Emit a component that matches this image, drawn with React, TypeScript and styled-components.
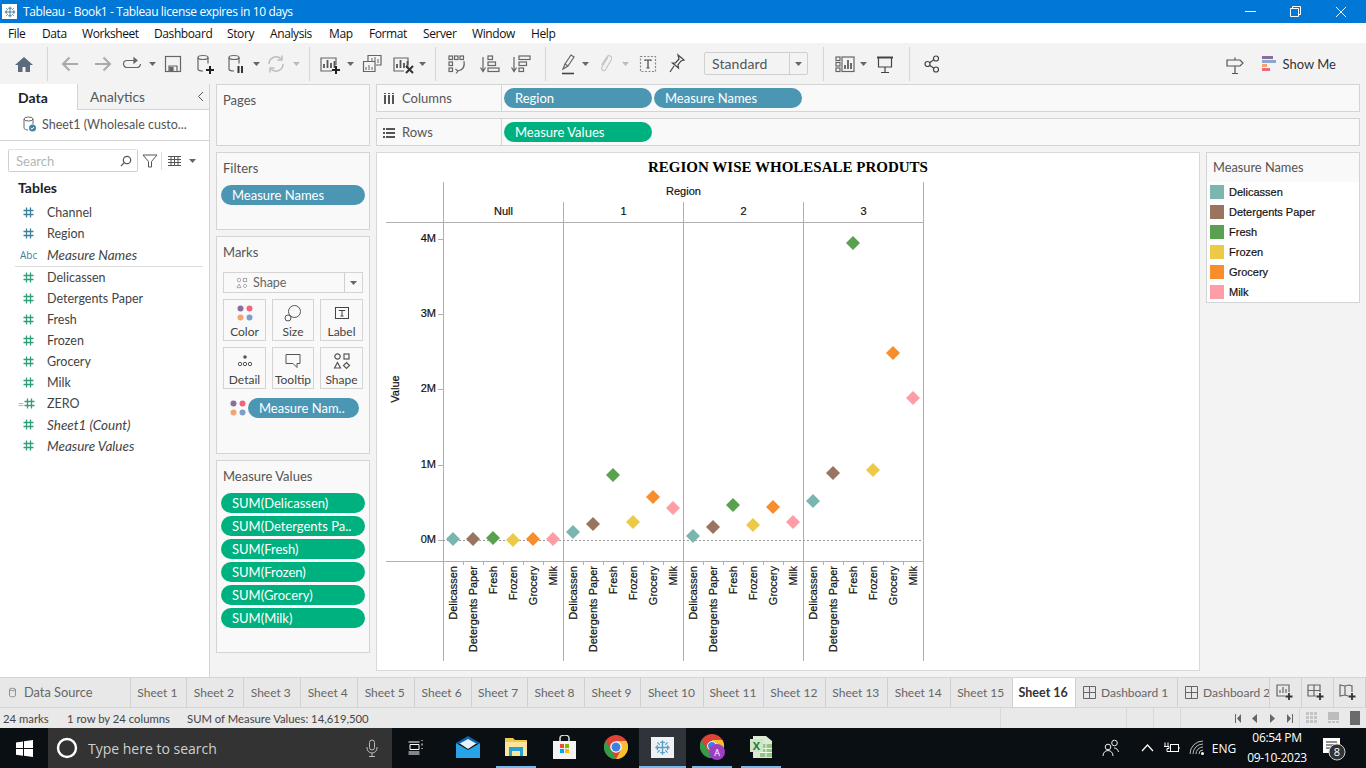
import React, { Fragment, ReactNode } from 'react';
import styled, { createGlobalStyle } from 'styled-components';

const BLUE = '#4b96b3';
const GREEN = '#00b180';
const UI = '"Lato", "Open Sans", sans-serif';
const WIN = '"Open Sans", "Noto Sans", sans-serif';

const Global = createGlobalStyle`
  html, body { margin: 0; padding: 0; width: 1366px; height: 768px; overflow: hidden; background: #f3f3f3; }
  * { box-sizing: border-box; }
  svg { display: block; flex: none; }
`;

const Page = styled.div`
  width: 1366px;
  height: 768px;
  display: flex;
  flex-direction: column;
  font-family: ${UI};
  color: #444;
`;

/* title bar */
const TitleBar = styled.div`
  height: 23px;
  background: #0178d6;
  display: flex;
  align-items: center;
  color: #fff;
  font: 12px ${WIN};
  padding-right: 2px;
`;
const TitleLogo = styled.div`
  width: 15px;
  height: 15px;
  margin-left: 2px;
  margin-right: 6px;
  background: #fff;
  display: flex;
  align-items: center;
  justify-content: center;
`;
const TitleText = styled.div`
  flex: 1;
  letter-spacing: -0.37px;
`;
const WinButton = styled.div<{ $w: number }>`
  width: ${p => p.$w}px;
  display: flex;
  justify-content: center;
`;

/* menu */
const MenuBar = styled.div`
  height: 20px;
  background: #fff;
  padding-left: 8px;
  display: grid;
  grid-template-columns: 34px 40px 72px 73px 43px 59px 40px 54px 49px 59px auto;
  align-items: center;
  font: 12px ${WIN};
  color: #111;
`;
const MenuItem = styled.span`
  letter-spacing: -0.4px;
`;

/* toolbar */
const Toolbar = styled.div`
  height: 41px;
  background: #f3f3f3;
  display: flex;
  align-items: center;
`;
const Tool = styled.div<{ $ml: number; $w: number }>`
  margin-left: ${p => p.$ml}px;
  width: ${p => p.$w}px;
  height: 24px;
  display: flex;
  align-items: center;
  justify-content: center;
`;
const ToolSep = styled.div<{ $ml: number }>`
  margin-left: ${p => p.$ml}px;
  width: 1px;
  height: 34px;
  background: #d6d6d6;
`;
const Combo = styled.div<{ $ml: number }>`
  margin-left: ${p => p.$ml}px;
  width: 104px;
  height: 23px;
  border: 1px solid #cfcfcf;
  border-radius: 2px;
  display: flex;
  align-items: center;
  font-size: 14px;
  letter-spacing: 0.1px;
  color: #555;
  padding-left: 7px;
`;
const ComboLabel = styled.span`
  flex: 1;
  margin-bottom: 1px;
`;
const ComboCaret = styled.div`
  width: 18px;
  height: 100%;
  border-left: 1px solid #cfcfcf;
  display: flex;
  align-items: center;
  justify-content: center;
`;
const ShowMe = styled.div`
  margin-left: 18px;
  display: flex;
  align-items: center;
  gap: 7px;
  font-size: 13px;
  color: #333;
`;

/* body */
const Body = styled.div`
  height: 593px;
  display: flex;
  background: #f3f3f3;
`;
const DataPane = styled.div`
  width: 210px;
  background: #fff;
  border-right: 1px solid #d4d4d4;
`;
const PaneTabs = styled.div`
  height: 26px;
  display: flex;
  background: #f3f3f3;
`;
const PaneTab = styled.div<{ $active?: boolean }>`
  width: ${p => (p.$active ? 77 : 132)}px;
  display: flex;
  align-items: center;
  padding-left: ${p => (p.$active ? 18 : 12)}px;
  font-size: ${p => (p.$active ? 14 : 13.7)}px;
  font-weight: ${p => (p.$active ? 700 : 400)};
  color: ${p => (p.$active ? '#222' : '#555')};
  background: ${p => (p.$active ? '#fff' : '#f3f3f3')};
  border-bottom: ${p => (p.$active ? 'none' : '1px solid #d4d4d4')};
  border-left: ${p => (p.$active ? 'none' : '1px solid #d4d4d4')};
`;
const Chevron = styled.div`
  flex: 1;
  display: flex;
  align-items: center;
  justify-content: flex-end;
  padding-right: 5px;
`;
const SourceRow = styled.div`
  height: 31px;
  border-bottom: 1px solid #d4d4d4;
  display: flex;
  align-items: center;
  padding: 0 0 2px 22px;
  gap: 5px;
  font-size: 12.5px;
  color: #555;
`;
const SearchRow = styled.div`
  margin-top: 8px;
  height: 23px;
  display: flex;
  align-items: center;
  padding-left: 8px;
`;
const SearchBox = styled.div`
  width: 130px;
  height: 23px;
  border: 1px solid #cfcfcf;
  border-top-color: #e2e2e2;
  border-radius: 2px;
  display: flex;
  align-items: center;
  justify-content: space-between;
  padding: 0 5px 0 7px;
  font-size: 13px;
  color: #b5b5b5;
`;
const FilterSlot = styled.div`
  margin-left: 4px;
`;
const SearchDivider = styled.div`
  width: 1px;
  height: 18px;
  background: #ddd;
  margin: 0 6px 0 3px;
`;
const ViewCaret = styled.div`
  margin-left: 8px;
`;
const TablesTitle = styled.div`
  margin: 5px 0 0 18px;
  height: 22px;
  line-height: 22px;
  font-size: 14px;
  font-weight: 700;
  color: #222;
`;
const FieldList = styled.div`
  margin-top: 3px;
`;
const FieldRow = styled.div<{ $italic?: boolean }>`
  height: 21px;
  display: flex;
  align-items: center;
  font-size: ${p => (p.$italic ? 13.5 : 12.5)}px;
  font-style: ${p => (p.$italic ? 'italic' : 'normal')};
  color: #444;
`;
const FieldIcon = styled.div<{ $color: string }>`
  width: 47px;
  padding-left: 23px;
  font-size: 10px;
  font-style: normal;
  font-family: ${WIN};
  color: ${p => p.$color};
  display: flex;
  align-items: center;
`;
const AbcLabel = styled.span`
  margin-left: -3px;
`;
const CalcMark = styled.span`
  margin-left: -5px;
`;
const FieldDivider = styled.div`
  height: 1px;
  background: #dcdcdc;
  margin: 1px 6px 0 15px;
`;

const SideColumn = styled.div`
  width: 160px;
  margin-left: 6px;
  display: flex;
  flex-direction: column;
  gap: 6px;
`;
const Card = styled.div<{ $h: number }>`
  width: 154px;
  height: ${p => p.$h}px;
  background: #f9f9f9;
  border: 1px solid #d4d4d4;
  padding: 0 4px;
`;
const CardTitle = styled.div`
  height: 32px;
  padding: 7px 2px 0;
  font-size: 13px;
  line-height: 17px;
  color: #555;
`;
const Pill = styled.div<{ $green?: boolean; $w?: number }>`
  width: ${p => (p.$w ? `${p.$w}px` : '100%')};
  height: 20px;
  border-radius: 10px;
  background: ${p => (p.$green ? GREEN : BLUE)};
  color: #fff;
  font-size: 13px;
  line-height: 20px;
  padding-left: 11px;
  white-space: nowrap;
  overflow: hidden;
`;
const PillStack = styled.div`
  display: flex;
  flex-direction: column;
  gap: 3px;
`;
const MarkSelect = styled.div`
  margin: 3px 2px 0;
  height: 21px;
  border: 1px solid #d4d4d4;
  background: #f9f9f9;
  display: flex;
  align-items: center;
  font-size: 12.5px;
  color: #666;
  padding-left: 12px;
  gap: 5px;
`;
const MarkSelectLabel = styled.span`
  flex: 1;
`;
const MarkGrid = styled.div`
  margin: 6px 2px 0;
  display: grid;
  grid-template-columns: 43px 42px 43px;
  grid-auto-rows: 42px;
  column-gap: 6px;
  row-gap: 6px;
`;
const MarkButton = styled.div`
  border: 1px solid #d4d4d4;
  display: flex;
  flex-direction: column;
  align-items: center;
  font-size: 12px;
  color: #444;
  padding-top: 3px;
  gap: 1px;
  line-height: 15px;
`;
const MarkIconBox = styled.div`
  height: 20px;
  display: flex;
  align-items: center;
`;
const MarkPillRow = styled.div`
  margin-top: 9px;
  display: flex;
  align-items: center;
  padding-left: 9px;
  gap: 2px;
`;

const MainColumn = styled.div`
  width: 984px;
  display: flex;
  flex-direction: column;
`;
const Shelf = styled.div`
  height: 28px;
  margin-bottom: 6px;
  background: #f9f9f9;
  border: 1px solid #d4d4d4;
  display: flex;
  align-items: center;
`;
const ShelfLabel = styled.div`
  width: 125px;
  height: 100%;
  border-right: 1px solid #d4d4d4;
  display: flex;
  align-items: center;
  padding-left: 6px;
  gap: 7px;
  font-size: 13px;
  color: #555;
  margin-right: 2px;
`;
const ShelfPills = styled.div`
  display: flex;
  gap: 2px;
`;
const ContentRow = styled.div`
  display: flex;
  gap: 6px;
`;
const ChartCard = styled.div`
  width: 824px;
  height: 519px;
  background: #fff;
  border: 1px solid #d9d9d9;
`;
const ChartText = styled.text`
  font-family: "Liberation Sans", Arial, sans-serif;
  font-size: 11px;
  fill: #111;
  stroke: #111;
  stroke-width: 0.2px;
`;
const ChartTitle = styled.text`
  font-family: "Liberation Serif", "Times New Roman", serif;
  font-size: 15px;
  font-weight: 700;
  fill: #000;
`;
const Legend = styled.div`
  width: 154px;
  height: 151px;
  border: 1px solid #d4d4d4;
  background: #fff;
`;
const LegendHead = styled.div`
  height: 29px;
  background: #f9f9f9;
  padding: 6px 6px 0;
  font-size: 12.8px;
  color: #555;
`;
const LegendRow = styled.div`
  height: 20px;
  display: flex;
  align-items: center;
  padding-left: 3px;
  gap: 5px;
  font: 11px "Liberation Sans", Arial, sans-serif;
  color: #111;
  -webkit-text-stroke: 0.2px #111;
`;
const Swatch = styled.div<{ $c: string }>`
  width: 14px;
  height: 14px;
  background: ${p => p.$c};
`;

/* tabs */
const TabBar = styled.div`
  height: 31px;
  background: #e8e8e8;
  border-top: 1px solid #d4d4d4;
  border-bottom: 1px solid #d4d4d4;
  display: flex;
`;
const SheetTab = styled.div<{ $w: number; $active?: boolean }>`
  width: ${p => p.$w}px;
  display: flex;
  align-items: center;
  justify-content: center;
  gap: 5px;
  padding: 0 2px 1px 0;
  font-size: ${p => (p.$active ? 12.5 : 12)}px;
  white-space: nowrap;
  overflow: hidden;
  color: ${p => (p.$active ? '#333' : '#666')};
  font-weight: ${p => (p.$active ? 700 : 400)};
  background: ${p => (p.$active ? '#fff' : 'transparent')};
  border-right: 1px solid #d0d0d0;
`;
const SourceTab = styled(SheetTab)`
  justify-content: flex-start;
  padding-left: 9px;
  gap: 8px;
  font-size: 12.8px;
`;
const ClippedTab = styled(SheetTab)`
  justify-content: flex-start;
  padding-left: 7px;
`;

/* status */
const StatusBar = styled.div`
  height: 20px;
  background: #e9e9e9;
  display: flex;
  align-items: center;
  font-size: 11.3px;
  color: #444;
`;
const StatusText = styled.span<{ $w: number; $pad?: number }>`
  width: ${p => p.$w}px;
  padding-left: ${p => p.$pad || 0}px;
  white-space: nowrap;
`;
const StatusCell = styled.div<{ $w: number; $end?: boolean }>`
  width: ${p => p.$w}px;
  height: 100%;
  border-left: 1px solid #d8d8d8;
  display: flex;
  align-items: center;
  justify-content: ${p => (p.$end ? 'flex-end' : 'center')};
  padding: 0 6px;
`;

/* windows taskbar */
const Taskbar = styled.div`
  height: 40px;
  background: #0a0f14;
  display: flex;
  align-items: center;
  color: #fff;
  font-family: ${WIN};
`;
const StartButton = styled.div`
  width: 48px;
  display: flex;
  justify-content: center;
`;
const SearchBar = styled.div`
  width: 344px;
  height: 40px;
  background: #333;
  display: flex;
  align-items: center;
  padding-left: 8px;
  gap: 10px;
  font-size: 14px;
  color: #cfcfcf;
`;
const SearchHint = styled.span`
  flex: 1;
`;
const MicSlot = styled.div`
  width: 26px;
`;
const TaskApp = styled.div<{ $w: number; $ml?: number; $on?: boolean; $lit?: boolean }>`
  width: ${p => p.$w}px;
  margin-left: ${p => p.$ml || 0}px;
  height: 40px;
  display: flex;
  align-items: center;
  justify-content: center;
  background: ${p => (p.$lit ? '#2f343a' : 'transparent')};
  border-bottom: 2px solid ${p => (p.$on ? '#76b9ed' : 'transparent')};
`;
const AppTile = styled.div`
  width: 23px;
  height: 21px;
  background: #eef2f5;
  display: flex;
  align-items: center;
  justify-content: center;
`;
const Tray = styled.div`
  margin-left: auto;
  display: flex;
  align-items: center;
  height: 100%;
`;
const TraySlot = styled.div<{ $w: number; $ml?: number }>`
  width: ${p => p.$w}px;
  margin-left: ${p => p.$ml || 0}px;
  display: flex;
  justify-content: center;
  align-items: center;
  font-size: 12px;
`;
const Clock = styled.div`
  width: 78px;
  text-align: center;
  font-size: 12px;
  line-height: 20px;
  letter-spacing: -0.3px;
`;

/* icons */
const Svg = ({ w = 24, h = 24, children }: { w?: number; h?: number; children: ReactNode }) => (
  <svg width={w} height={h} viewBox={`0 0 ${w} ${h}`} fill="none" stroke="#666" strokeWidth="1.2">{children}</svg>
);
const Caret = ({ c = '#666' }: { c?: string }) => (
  <svg width="7" height="4" viewBox="0 0 7 4"><path d="M0 0h7L3.5 4z" fill={c} /></svg>
);
const Cylinder = () => (
  <Fragment>
    <ellipse cx="8" cy="5.5" rx="5" ry="2" />
    <path d="M3 5.5v11.5c0 1.2 2 2 5 2M13 5.5v6" />
  </Fragment>
);
const BarsGlyph = ({ y = 0 }: { y?: number }) => (
  <path d={`M5 ${y + 13}v-4M8.5 ${y + 13}v-8M12 ${y + 13}v-5M15.5 ${y + 13}v-7`} strokeWidth="1.8" stroke="#555" />
);
const HashIcon = ({ c }: { c: string }) => (
  <svg width="11" height="11" viewBox="0 0 11 11" stroke={c} strokeWidth="1.3" fill="none">
    <path d="M3.5 0.5v10M7.5 0.5v10M0.5 3.5h10M0.5 7.5h10" />
  </svg>
);
const Dots = () => (
  <svg width="16" height="16" viewBox="0 0 16 16">
    <circle cx="3.5" cy="3.5" r="3" fill="#8a6f9c" />
    <circle cx="12.5" cy="3.5" r="3" fill="#f2667a" />
    <circle cx="3.5" cy="12.5" r="3" fill="#f4a56f" />
    <circle cx="12.5" cy="12.5" r="3" fill="#7f9fcb" />
  </svg>
);
const ShapeGlyph = ({ c = '#666', size = 18 }: { c?: string; size?: number }) => (
  <svg width={size} height={size} viewBox="0 0 18 18" fill="none" stroke={c} strokeWidth="1.2">
    <circle cx="4.5" cy="4.5" r="2.7" />
    <rect x="11" y="2" width="5" height="5" />
    <path d="M4.5 10.5l3 5.5h-6z" />
    <path d="M13.5 10.5l3 3-3 3-3-3z" />
  </svg>
);
const Snowflake = ({ size, c }: { size: number; c: string }) => (
  <svg width={size} height={size} viewBox="0 0 24 24" stroke={c} fill="none" strokeWidth="1.8">
    <path d="M12 3v18M3 12h18" />
    <path d="M9 5.5h6M9 18.5h6M5.5 9v6M18.5 9v6" />
    <path d="M5.5 5.5l3 3M18.5 5.5l-3 3M5.5 18.5l3-3M18.5 18.5l-3-3" strokeWidth="1.5" />
  </svg>
);
const ChromeBall = ({ size }: { size: number }) => (
  <svg width={size} height={size} viewBox="0 0 24 24">
    <circle cx="12" cy="12" r="12" fill="#db4437" />
    <path d="M12 24A12 12 0 0 1 1.6 6L7.5 16 12 24z" fill="#2f9e48" />
    <path d="M12 24a12 12 0 0 0 10.4-18H12l4.5 10z" fill="#fbc02d" />
    <circle cx="12" cy="12" r="5.8" fill="#fff" />
    <circle cx="12" cy="12" r="4.5" fill="#3f81e0" />
  </svg>
);

const toolItems: { c: number; w: number; icon?: ReactNode; sep?: boolean }[] = [
  { c: 24, w: 20, icon: <Svg w={20} h={20}><path d="M10 3L1 11h3v7h4.5v-5h3v5H16v-7h3z" fill="#5b6b7d" stroke="none" /></Svg> },
  { c: 47.5, w: 1, sep: true },
  { c: 70, w: 18, icon: <Svg w={18}><path d="M17 12H2M8.5 5.5L2 12l6.5 6.5" stroke="#a9a9a9" strokeWidth="2" /></Svg> },
  { c: 103, w: 18, icon: <Svg w={18}><path d="M1 12h15M9.5 5.5L16 12l-6.5 6.5" stroke="#a9a9a9" strokeWidth="2" /></Svg> },
  { c: 132, w: 20, icon: <Svg w={20}><path d="M12 8.5H5a3.5 3.5 0 0 0 0 7h10a3.5 3.5 0 0 0 3.5-3.5" /><path d="M12 6l3 2.5-3 2.5z" fill="#666" /></Svg> },
  { c: 152.5, w: 7, icon: <Caret /> },
  { c: 173, w: 18, icon: <Svg w={18}><rect x="1.5" y="4.5" width="15" height="15" /><path d="M5 19v-5h8v5" /><rect x="6" y="15.5" width="3" height="3.5" fill="#666" /></Svg> },
  { c: 205, w: 20, icon: <Svg w={20}><Cylinder /><path d="M15 14v8M11 18h8" stroke="#222" strokeWidth="2" /></Svg> },
  { c: 236, w: 20, icon: <Svg w={20}><Cylinder /><path d="M12.5 14v7M16 14v7" stroke="#333" strokeWidth="2" /></Svg> },
  { c: 256.5, w: 7, icon: <Caret /> },
  { c: 275.5, w: 18, icon: <Svg w={18}><path d="M2 12a7 7 0 0 1 12-5M16 12a7 7 0 0 1-12 5" stroke="#bdbdbd" strokeWidth="1.5" /><path d="M15 3.5v4.5h-4.5M3 20.5V16h4.5" stroke="#bdbdbd" strokeWidth="1.5" /></Svg> },
  { c: 296.5, w: 7, icon: <Caret c="#bbb" /> },
  { c: 309.5, w: 1, sep: true },
  { c: 330, w: 22, icon: <Svg w={22}><path d="M13 19H2V6h15v7" /><BarsGlyph y={3} /><path d="M17 14v8M13 18h8" stroke="#222" strokeWidth="2" /></Svg> },
  { c: 350.5, w: 7, icon: <Caret /> },
  { c: 372, w: 20, icon: <Svg w={20}><path d="M6 9V3.5h13V13h-5" /><path d="M1.5 9.5H13v10H1.5z" fill="#f3f3f3" /><path d="M10 9V6M13 9V5M16 11V7M4 18v-3M7 18v-5M10 18v-3" strokeWidth="1" /></Svg> },
  { c: 403, w: 22, icon: <Svg w={22}><path d="M12 19H2V6h14v7" /><BarsGlyph y={3} /><path d="M14 14l7 7M21 14l-7 7" stroke="#333" strokeWidth="2" /></Svg> },
  { c: 422.5, w: 7, icon: <Caret /> },
  { c: 435.5, w: 1, sep: true },
  { c: 457, w: 20, icon: <Svg w={20}><rect x="2" y="4" width="3.5" height="3.5" /><rect x="7.5" y="4" width="3.5" height="3.5" /><rect x="13" y="4" width="3.5" height="3.5" /><rect x="2" y="10" width="3.5" height="3.5" /><rect x="2" y="16" width="3.5" height="3.5" /><path d="M17 9c1 5-1 9-6 10M8.5 17l2.5 2-2 2.5" /></Svg> },
  { c: 490, w: 20, icon: <Svg w={20}><path d="M3 5v14M0.5 15.5L3 19.5l2.5-4" /><rect x="8" y="4" width="4.5" height="3.5" /><rect x="8" y="10" width="7.5" height="3.5" /><rect x="8" y="16" width="11" height="3.5" /></Svg> },
  { c: 521, w: 20, icon: <Svg w={20}><path d="M3 5v14M0.5 15.5L3 19.5l2.5-4" /><rect x="8" y="4" width="11" height="3.5" /><rect x="8" y="10" width="7.5" height="3.5" /><rect x="8" y="16" width="4.5" height="3.5" /></Svg> },
  { c: 545.5, w: 1, sep: true },
  { c: 568, w: 14, icon: <Svg w={14}><path d="M2 17l2-5 6-9 3 2-6 9z" /><path d="M4 12l3 2" /><path d="M1 21.5h12" stroke="#444" strokeWidth="1.6" /></Svg> },
  { c: 585.5, w: 7, icon: <Caret /> },
  { c: 605, w: 14, icon: <Svg w={14}><path d="M10 5l-6 10c-1.5 3 2 5 3.5 2.5l6-10c1.5-3-3-5.5-5-2L3.5 13" stroke="#c4c4c4" /></Svg> },
  { c: 625.5, w: 7, icon: <Caret c="#bbb" /> },
  { c: 647.5, w: 18, icon: <Svg w={18}><rect x="1.5" y="4.5" width="15" height="15" strokeDasharray="2 1.5" stroke="#888" /><path d="M6 9V8h6v1M9 8v8M7.5 16h3" stroke="#444" /></Svg> },
  { c: 677, w: 18, icon: <Svg w={18}><path d="M10 3l6 5-3 1-3 4 .5 3-6-5 3 0 3.5-4z" stroke="#444" /><path d="M6 14l-4 6" stroke="#444" /></Svg> },
];

const toolsAfterCombo: { c: number; w: number; icon?: ReactNode; sep?: boolean }[] = [
  { c: 823.5, w: 1, sep: true },
  { c: 845, w: 20, icon: <Svg w={20}><rect x="1" y="5" width="4" height="3.5" /><rect x="1" y="10.5" width="4" height="3.5" /><rect x="1" y="16" width="4" height="3.5" /><rect x="7" y="5" width="12" height="14.5" /><path d="M10 17v-4M13 17V8M16 17v-6" strokeWidth="1.7" stroke="#555" /></Svg> },
  { c: 863.5, w: 7, icon: <Caret /> },
  { c: 885, w: 18, icon: <Svg w={18}><path d="M2.5 5.5V15h13V5.5M9 15v5.5M5 20.5h8" stroke="#444" /><path d="M1 5.5h16" stroke="#444" strokeWidth="2" /></Svg> },
  { c: 909.5, w: 1, sep: true },
  { c: 932, w: 16, icon: <Svg w={16}><circle cx="3.5" cy="12" r="2.5" stroke="#444" /><circle cx="12" cy="6.5" r="2.5" stroke="#444" /><circle cx="12" cy="17.5" r="2.5" stroke="#444" /><path d="M5.7 10.7l4-3M5.7 13.3l4 3" stroke="#444" /></Svg> },
  { c: 1234.5, w: 18, icon: <Svg w={18}><path d="M1 8h13l3 3-3 3H1zM9 8V5.5M9 14v7M6 21.5h6" stroke="#555" /></Svg> },
];

const Tools = ({ items, start }: { items: typeof toolItems; start: number }) => {
  let right = start;
  return (
    <Fragment>
      {items.map((t, i) => {
        const left = t.c - t.w / 2;
        const ml = left - right;
        right = left + t.w;
        if (t.sep) return <ToolSep key={i} $ml={ml} />;
        return <Tool key={i} $ml={ml} $w={t.w}>{t.icon}</Tool>;
      })}
    </Fragment>
  );
};

const MEASURE = ['#7ab5b0', '#99755f', '#59a14f', '#edc948', '#f78e2b', '#ff9da7'];
const names = ['Delicassen', 'Detergents Paper', 'Fresh', 'Frozen', 'Grocery', 'Milk'];
const regions = ['Null', '1', '2', '3'];
const markY = [
  [539, 539, 538, 540, 539, 539],
  [532, 524, 475, 522, 497, 508],
  [536, 527, 505, 525, 507, 522],
  [501, 473, 243, 470, 353, 398],
];
const ticks: [string, number][] = [['4M', 239], ['3M', 314], ['2M', 389], ['1M', 465], ['0M', 540]];

const Chart = () => (
  <svg width="822" height="517" viewBox="377 153 822 517">
    <ChartTitle x="788" y="172" textAnchor="middle">REGION WISE WHOLESALE PRODUTS</ChartTitle>
    <ChartText x="683.5" y="195" textAnchor="middle">Region</ChartText>
    <g stroke="#b0b0b0" strokeWidth="1">
      <path d="M386 222.5H924M386 561.5H924" />
      <path d="M443.5 182V661M923.5 182V661M563.5 202V661M683.5 202V661M803.5 202V661" />
      {ticks.map(([, y]) => <path key={y} d={`M438 ${y + 0.5}H443`} />)}
      {Array.from({ length: 24 }).map((_, i) => (
        <path key={i} d={`M${443.5 + i * 20} 561V565`} />
      ))}
    </g>
    <path d="M443 540.5H923" stroke="#999" strokeDasharray="2 2" />
    {regions.map((r, i) => (
      <ChartText key={r} x={503.5 + i * 120} y="215" textAnchor="middle">{r}</ChartText>
    ))}
    {ticks.map(([t, y]) => (
      <ChartText key={t} x="436" y={y + 3} textAnchor="end">{t}</ChartText>
    ))}
    <ChartText transform="translate(399 389) rotate(-90)" textAnchor="middle">Value</ChartText>
    {regions.map((_, g) => names.map((n, k) => {
      const x = 453 + g * 120 + k * 20;
      return (
        <Fragment key={`${g}-${k}`}>
          <ChartText transform={`translate(${x + 3.5} 566) rotate(-90)`} textAnchor="end">{n}</ChartText>
          <path d={`M${x} ${markY[g][k] - 7}l7 7-7 7-7-7z`} fill={MEASURE[k]} />
        </Fragment>
      );
    }))}
  </svg>
);

const fields: { n: string; c?: string; i?: boolean; t?: string }[] = [
  { n: 'Channel', c: '#3f7f9c' },
  { n: 'Region', c: '#3f7f9c' },
  { n: 'Measure Names', i: true, t: 'Abc' },
];
const measures: { n: string; i?: boolean; calc?: boolean }[] = [
  { n: 'Delicassen' }, { n: 'Detergents Paper' }, { n: 'Fresh' }, { n: 'Frozen' },
  { n: 'Grocery' }, { n: 'Milk' }, { n: 'ZERO', calc: true },
  { n: 'Sheet1 (Count)', i: true }, { n: 'Measure Values', i: true },
];

const sheets: [string, number][] = [
  ['Sheet 1', 56], ['Sheet 2', 57], ['Sheet 3', 57], ['Sheet 4', 57], ['Sheet 5', 57], ['Sheet 6', 57],
  ['Sheet 7', 56], ['Sheet 8', 57], ['Sheet 9', 57], ['Sheet 10', 63], ['Sheet 11', 60], ['Sheet 12', 62],
  ['Sheet 13', 62], ['Sheet 14', 63], ['Sheet 15', 62],
];

const GridIcon = () => (
  <svg width="13" height="13" viewBox="0 0 13 13" fill="none" stroke="#666"><path d="M.5.5h12v12H.5zM6.5.5v12M.5 6.5h12" /></svg>
);

const App = () => (
  <Page>
    <Global />
    <TitleBar>
      <TitleLogo><Snowflake size={14} c="#4d7f9e" /></TitleLogo>
      <TitleText>Tableau - Book1 - Tableau license expires in 10 days</TitleText>
      <WinButton $w={44}><svg width="11" height="1"><path d="M0 .5h11" stroke="#fff" /></svg></WinButton>
      <WinButton $w={46}><svg width="11" height="11" fill="none" stroke="#fff"><path d="M.5 2.5h8v8h-8zM2.5 2.5v-2h8v8h-2" /></svg></WinButton>
      <WinButton $w={46}><svg width="12" height="12" stroke="#fff"><path d="M1 1l10 10M11 1L1 11" /></svg></WinButton>
    </TitleBar>
    <MenuBar>
      {['File', 'Data', 'Worksheet', 'Dashboard', 'Story', 'Analysis', 'Map', 'Format', 'Server', 'Window', 'Help'].map(m => (
        <MenuItem key={m}>{m}</MenuItem>
      ))}
    </MenuBar>
    <Toolbar>
      <Tools items={toolItems} start={0} />
      <Combo $ml={18}>
        <ComboLabel>Standard</ComboLabel>
        <ComboCaret><Caret /></ComboCaret>
      </Combo>
      <Tools items={toolsAfterCombo} start={808} />
      <ShowMe>
        <svg width="14" height="15" viewBox="0 0 14 15">
          <rect y="0" width="11" height="3" fill="#8a6f9c" />
          <rect y="4" width="14" height="3" fill="#8aa8cf" />
          <rect y="8" width="5" height="3" fill="#f4a56f" />
          <rect y="12" width="8" height="3" fill="#f2667a" />
        </svg>
        Show Me
      </ShowMe>
    </Toolbar>
    <Body>
      <DataPane>
        <PaneTabs>
          <PaneTab $active>Data</PaneTab>
          <PaneTab>
            Analytics
            <Chevron>
              <svg width="7" height="11" fill="none" stroke="#555"><path d="M6 1L1.5 5.5 6 10" /></svg>
            </Chevron>
          </PaneTab>
        </PaneTabs>
        <SourceRow>
          <svg width="15" height="16" viewBox="0 0 15 16" fill="none" stroke="#666">
            <ellipse cx="6.5" cy="3" rx="4.5" ry="2" />
            <path d="M2 3v9c0 1 2 2 4 2M11 3v5" />
            <circle cx="10.5" cy="12" r="3.5" fill="#3f87a8" stroke="none" />
            <path d="M8.8 12l1.2 1.2 2-2.2" stroke="#fff" />
          </svg>
          Sheet1 (Wholesale custo...
        </SourceRow>
        <SearchRow>
          <SearchBox>
            Search
            <svg width="12" height="12" viewBox="0 0 12 12" fill="none" stroke="#555" strokeWidth="1.2"><circle cx="7" cy="5" r="3.7" /><path d="M4.3 7.7L1 11" /></svg>
          </SearchBox>
          <FilterSlot>
            <svg width="16" height="16" viewBox="0 0 16 16" fill="none" stroke="#555"><path d="M1 2h14l-5.5 6.5V14h-3V8.5z" /></svg>
          </FilterSlot>
          <SearchDivider />
          <svg width="13" height="10" viewBox="0 0 13 10" stroke="#555"><path d="M0 .5h13M0 3.5h13M0 6.5h13M0 9.5h13M3 0v10M6.5 0v10M10 0v10" /></svg>
          <ViewCaret><Caret /></ViewCaret>
        </SearchRow>
        <TablesTitle>Tables</TablesTitle>
        <FieldList>
          {fields.map(f => (
            <FieldRow key={f.n} $italic={f.i}>
              <FieldIcon $color="#3f7f9c">{f.t ? <AbcLabel>{f.t}</AbcLabel> : <HashIcon c={f.c as string} />}</FieldIcon>
              {f.n}
            </FieldRow>
          ))}
          <FieldDivider />
          {measures.map(f => (
            <FieldRow key={f.n} $italic={f.i}>
              <FieldIcon $color="#2e9e7c">
                {f.calc && <CalcMark>=</CalcMark>}
                <HashIcon c="#2e9e7c" />
              </FieldIcon>
              {f.n}
            </FieldRow>
          ))}
        </FieldList>
      </DataPane>
      <SideColumn>
        <Card $h={62}><CardTitle>Pages</CardTitle></Card>
        <Card $h={78}>
          <CardTitle>Filters</CardTitle>
          <Pill>Measure Names</Pill>
        </Card>
        <Card $h={218}>
          <CardTitle>Marks</CardTitle>
          <MarkSelect>
            <ShapeGlyph c="#999" size={12} />
            <MarkSelectLabel>Shape</MarkSelectLabel>
            <ComboCaret><Caret /></ComboCaret>
          </MarkSelect>
          <MarkGrid>
            <MarkButton><MarkIconBox><Dots /></MarkIconBox>Color</MarkButton>
            <MarkButton>
              <MarkIconBox>
                <svg width="18" height="18" viewBox="0 0 18 18" fill="none" stroke="#555"><circle cx="10.5" cy="7.5" r="6" /><circle cx="4" cy="14" r="3" fill="#f9f9f9" /></svg>
              </MarkIconBox>
              Size
            </MarkButton>
            <MarkButton>
              <MarkIconBox>
                <svg width="14" height="14" viewBox="0 0 14 14" fill="none" stroke="#444"><rect x=".5" y="1.5" width="13" height="11" /><path d="M4 5V4.500h6V5M7 4.500v5.500M5.500 10h3" /></svg>
              </MarkIconBox>
              Label
            </MarkButton>
            <MarkButton>
              <MarkIconBox>
                <svg width="16" height="14" viewBox="0 0 16 14" fill="none" stroke="#555"><circle cx="8" cy="3" r="1.8" fill="#555" stroke="none" /><circle cx="3" cy="10" r="1.7" /><circle cx="8" cy="10" r="1.7" /><circle cx="13" cy="10" r="1.7" /></svg>
              </MarkIconBox>
              Detail
            </MarkButton>
            <MarkButton>
              <MarkIconBox>
                <svg width="16" height="16" viewBox="0 0 16 16" fill="none" stroke="#555"><path d="M1 1.5h14v9h-3v4l-4-4H1z" /></svg>
              </MarkIconBox>
              Tooltip
            </MarkButton>
            <MarkButton><MarkIconBox><ShapeGlyph c="#555" /></MarkIconBox>Shape</MarkButton>
          </MarkGrid>
          <MarkPillRow>
            <Dots />
            <Pill $w={111}>Measure Nam..</Pill>
          </MarkPillRow>
        </Card>
        <Card $h={193}>
          <CardTitle>Measure Values</CardTitle>
          <PillStack>
            {['SUM(Delicassen)', 'SUM(Detergents Pa..', 'SUM(Fresh)', 'SUM(Frozen)', 'SUM(Grocery)', 'SUM(Milk)'].map(s => (
              <Pill key={s} $green>{s}</Pill>
            ))}
          </PillStack>
        </Card>
      </SideColumn>
      <MainColumn>
        <Shelf>
          <ShelfLabel>
            <svg width="12" height="11" fill="#555"><path d="M1 2h2v9H1zM5 2h2v9H5zM9 2h2v9H9zM1 0h2v1H1zM5 0h2v1H5zM9 0h2v1H9z" /></svg>
            Columns
          </ShelfLabel>
          <ShelfPills>
            <Pill $w={148}>Region</Pill>
            <Pill $w={148}>Measure Names</Pill>
          </ShelfPills>
        </Shelf>
        <Shelf>
          <ShelfLabel>
            <svg width="12" height="11" fill="#555"><path d="M3 1h9v2H3zM3 5h9v2H3zM3 9h9v2H3zM0 1h2v2H0zM0 5h2v2H0zM0 9h2v2H0z" /></svg>
            Rows
          </ShelfLabel>
          <ShelfPills>
            <Pill $w={148} $green>Measure Values</Pill>
          </ShelfPills>
        </Shelf>
        <ContentRow>
          <ChartCard><Chart /></ChartCard>
          <Legend>
            <LegendHead>Measure Names</LegendHead>
            {names.map((n, i) => (
              <LegendRow key={n}><Swatch $c={MEASURE[i]} />{n}</LegendRow>
            ))}
          </Legend>
        </ContentRow>
      </MainColumn>
    </Body>
    <TabBar>
      <SourceTab $w={131}>
        <svg width="7" height="11" viewBox="0 0 9 12" fill="none" stroke="#777"><ellipse cx="4.5" cy="2" rx="3.8" ry="1.5" /><path d="M.7 2v8c0 1 1.5 1.5 3.8 1.500S8.300 11 8.300 10V2" /></svg>
        Data Source
      </SourceTab>
      {sheets.map(([s, w]) => <SheetTab key={s} $w={w}>{s}</SheetTab>)}
      <SheetTab $w={63} $active>Sheet 16</SheetTab>
      <SheetTab $w={102}><GridIcon />Dashboard 1</SheetTab>
      <ClippedTab $w={92}><GridIcon />Dashboard 2</ClippedTab>
      <SheetTab $w={32}><Svg w={20} h={20}><path d="M10 14H2V3h12v7" /><path d="M5 11V8M8 11V5M11 11V7" /><path d="M14 11v7M10.5 14.5h7" stroke="#333" strokeWidth="1.8" /></Svg></SheetTab>
      <SheetTab $w={32}><Svg w={20} h={20}><path d="M10 14H2V3h12v7M2 8.5h12M8 3v11" /><path d="M14 11v7M10.5 14.5h7" stroke="#333" strokeWidth="1.8" /></Svg></SheetTab>
      <SheetTab $w={32}><Svg w={20} h={20}><path d="M10 14l-3-1-5 1V3l5 1 4-1 3 1v6M7 4v9" /><path d="M14 11v7M10.5 14.5h7" stroke="#333" strokeWidth="1.8" /></Svg></SheetTab>
    </TabBar>
    <StatusBar>
      <StatusText $w={67} $pad={3}>24 marks</StatusText>
      <StatusText $w={120}>1 row by 24 columns</StatusText>
      <StatusText $w={813}>SUM of Measure Values: 14,619,500</StatusText>
      <StatusCell $w={126} />
      <StatusCell $w={27} />
      <StatusCell $w={27} />
      <StatusCell $w={119} $end>
        <svg width="58" height="9" viewBox="0 0 58 9" fill="#666">
          <path d="M0 0h1v9H0zM6 0v9L2 4.500zM22 0v9l-5-4.500zM35 0v9l5-4.500zM52 0v9l4-4.500zM57 0h1v9h-1z" />
        </svg>
      </StatusCell>
      <StatusCell $w={67}>
        <svg width="54" height="15" viewBox="0 0 54 15">
          <path d="M0 1h3v3H0zM4 1h3v3H4zM8 1h3v3H8zM0 5h3v3H0zM4 5h3v3H4zM8 5h3v3H8zM0 9h3v3H0zM4 9h3v3H4zM8 9h3v3H8z" fill="#c4c4c4" />
          <path d="M22 1h11v8H22z" fill="#bdbdbd" />
          <path d="M22 10h3v2h-3zM26 10h3v2h-3zM30 10h3v2h-3z" fill="#c4c4c4" />
          <path d="M44 0h10v14H44z" fill="#6b6b6b" />
        </svg>
      </StatusCell>
    </StatusBar>
    <Taskbar>
      <StartButton>
        <svg width="17" height="17" viewBox="0 0 17 17" fill="#fff"><path d="M0 2.4l7-1v6.7H0zM8 1.2l9-1.2v8.100H8zM0 9h7v6.700l-7-1zM8 9h9v8l-9-1.200z" /></svg>
      </StartButton>
      <SearchBar>
        <svg width="22" height="22" viewBox="0 0 22 22" fill="none" stroke="#fff" strokeWidth="2.4"><circle cx="11" cy="11" r="9" /></svg>
        <SearchHint>Type here to search</SearchHint>
        <MicSlot>
          <svg width="12" height="18" viewBox="0 0 12 18" fill="none" stroke="#bbb"><rect x="3.5" y="1" width="5" height="10" rx="2.5" /><path d="M1 8v1a5 5 0 0 0 10 0V8M6 14v3M3 17.500h6" /></svg>
        </MicSlot>
      </SearchBar>
      <TaskApp $w={48}>
        <svg width="16" height="16" viewBox="0 0 16 16" fill="none" stroke="#fff"><path d="M.5 3h11M.5 13h11M.5 15h11M2 5.5h9v5H2zM14 1v1M14 4.500v2M14 9v1" /></svg>
      </TaskApp>
      <TaskApp $w={56}>
        <svg width="24" height="22" viewBox="0 0 24 22">
          <path d="M0 7v15h24V7l-12 7z" fill="#28a4e6" />
          <path d="M3 7l9-5 9 5-9 6z" fill="#e8f3fb" />
          <path d="M0 7l12-7 12 7-3 1-9-5-9 5z" fill="#0d64b0" />
        </svg>
      </TaskApp>
      <TaskApp $w={40} $on>
        <svg width="22" height="18" viewBox="0 0 22 18">
          <path d="M0 0h8l2 2h12v16H0z" fill="#f3c64f" />
          <path d="M0 4h22v14H0z" fill="#fbe59a" />
          <path d="M4 9h14v9h-3v-5H7v5H4z" fill="#2a9fd6" />
        </svg>
      </TaskApp>
      <TaskApp $w={56}>
        <svg width="23" height="24" viewBox="0 0 23 24">
          <path d="M7 6V3a4.5 3 0 0 1 9 0v3" fill="none" stroke="#ddd" strokeWidth="1.5" />
          <path d="M0 6h23v18H0z" fill="#f4f4f4" />
          <path d="M7 9h4v4H7z" fill="#f25022" />
          <path d="M12 9h4v4h-4z" fill="#7fba00" />
          <path d="M7 14h4v4H7z" fill="#00a4ef" />
          <path d="M12 14h4v4h-4z" fill="#ffb900" />
        </svg>
      </TaskApp>
      <TaskApp $w={47}><ChromeBall size={24} /></TaskApp>
      <TaskApp $w={47} $on $lit>
        <AppTile><Snowflake size={19} c="#5a9fc7" /></AppTile>
      </TaskApp>
      <TaskApp $w={40} $ml={6} $on>
        <svg width="25" height="26" viewBox="0 0 25 26">
          <circle cx="12" cy="12" r="12" fill="#db4437" />
          <path d="M12 24A12 12 0 0 1 1.6 6L7.5 16 12 24z" fill="#2f9e48" />
          <path d="M12 24a12 12 0 0 0 10.4-18H12l4.5 10z" fill="#fbc02d" />
          <circle cx="12" cy="12" r="4.5" fill="#3f81e0" stroke="#fff" />
          <circle cx="17" cy="18" r="8" fill="#9c3fc0" />
          <text x="17" y="21.5" textAnchor="middle" fontSize="9" fill="#fff" fontFamily="Open Sans">A</text>
        </svg>
      </TaskApp>
      <TaskApp $w={40} $ml={9} $on>
        <svg width="23" height="24" viewBox="0 0 23 24">
          <path d="M3 1h13l6 5v17H3z" fill="#dcebd5" />
          <path d="M10 9h12v13H10z" fill="#93c581" />
          <path d="M10 13.5h12M10 17.5h12M16 9v13" stroke="#f2f7ef" />
          <path d="M0 4h13v13H0z" fill="#cfe6c7" />
          <text x="6.5" y="14.5" textAnchor="middle" fontSize="11" fontWeight="700" fill="#1f7a3d" fontFamily="Open Sans">X</text>
        </svg>
      </TaskApp>
      <Tray>
        <TraySlot $w={26}>
          <svg width="18" height="18" viewBox="0 0 18 18" fill="none" stroke="#eee"><circle cx="6" cy="8" r="2.8" /><circle cx="12.5" cy="4" r="2.8" /><path d="M1 17c0-3 2-5.5 5-5.5s5 2.5 5 5.5M12 9c2.5 0 4 1.5 4.5 4" /></svg>
        </TraySlot>
        <TraySlot $w={26} $ml={10}>
          <svg width="13" height="8" viewBox="0 0 13 8" fill="none" stroke="#fff" strokeWidth="1.2"><path d="M1 7l5.500-6L12 7" /></svg>
        </TraySlot>
        <TraySlot $w={24}>
          <svg width="16" height="14" viewBox="0 0 16 14" fill="none" stroke="#fff"><rect x="6.5" y="3.5" width="8" height="7" /><path d="M15 6v2" /><path d="M1 1.500v4M4 1.500v4M0 5.500h5v2H3v3h4" /></svg>
        </TraySlot>
        <TraySlot $w={26}>
          <svg width="16" height="16" viewBox="0 0 16 16" fill="none" stroke="#bbb"><path d="M1 14a13 13 0 0 1 13-13M4 14A10 10 0 0 1 14 4M7 14a7 7 0 0 1 7-7M10 14a4 4 0 0 1 4-4" /><circle cx="13.5" cy="13.5" r="1.5" fill="#fff" stroke="none" /></svg>
        </TraySlot>
        <TraySlot $w={28}>ENG</TraySlot>
        <Clock>06:54 PM<br />09-10-2023</Clock>
        <TraySlot $w={36}>
          <svg width="24" height="26" viewBox="0 0 24 26">
            <path d="M1 3h17v15H10l-3 3v-3H1z" fill="#fff" />
            <path d="M4 7h11M4 10h11M4 13h8" stroke="#222" />
            <circle cx="15" cy="17" r="8" fill="#333" stroke="#ccc" />
            <text x="15" y="21" textAnchor="middle" fontSize="11" fill="#fff" fontFamily="Open Sans">8</text>
          </svg>
        </TraySlot>
        <TraySlot $w={14} />
      </Tray>
    </Taskbar>
  </Page>
);

export default App;
